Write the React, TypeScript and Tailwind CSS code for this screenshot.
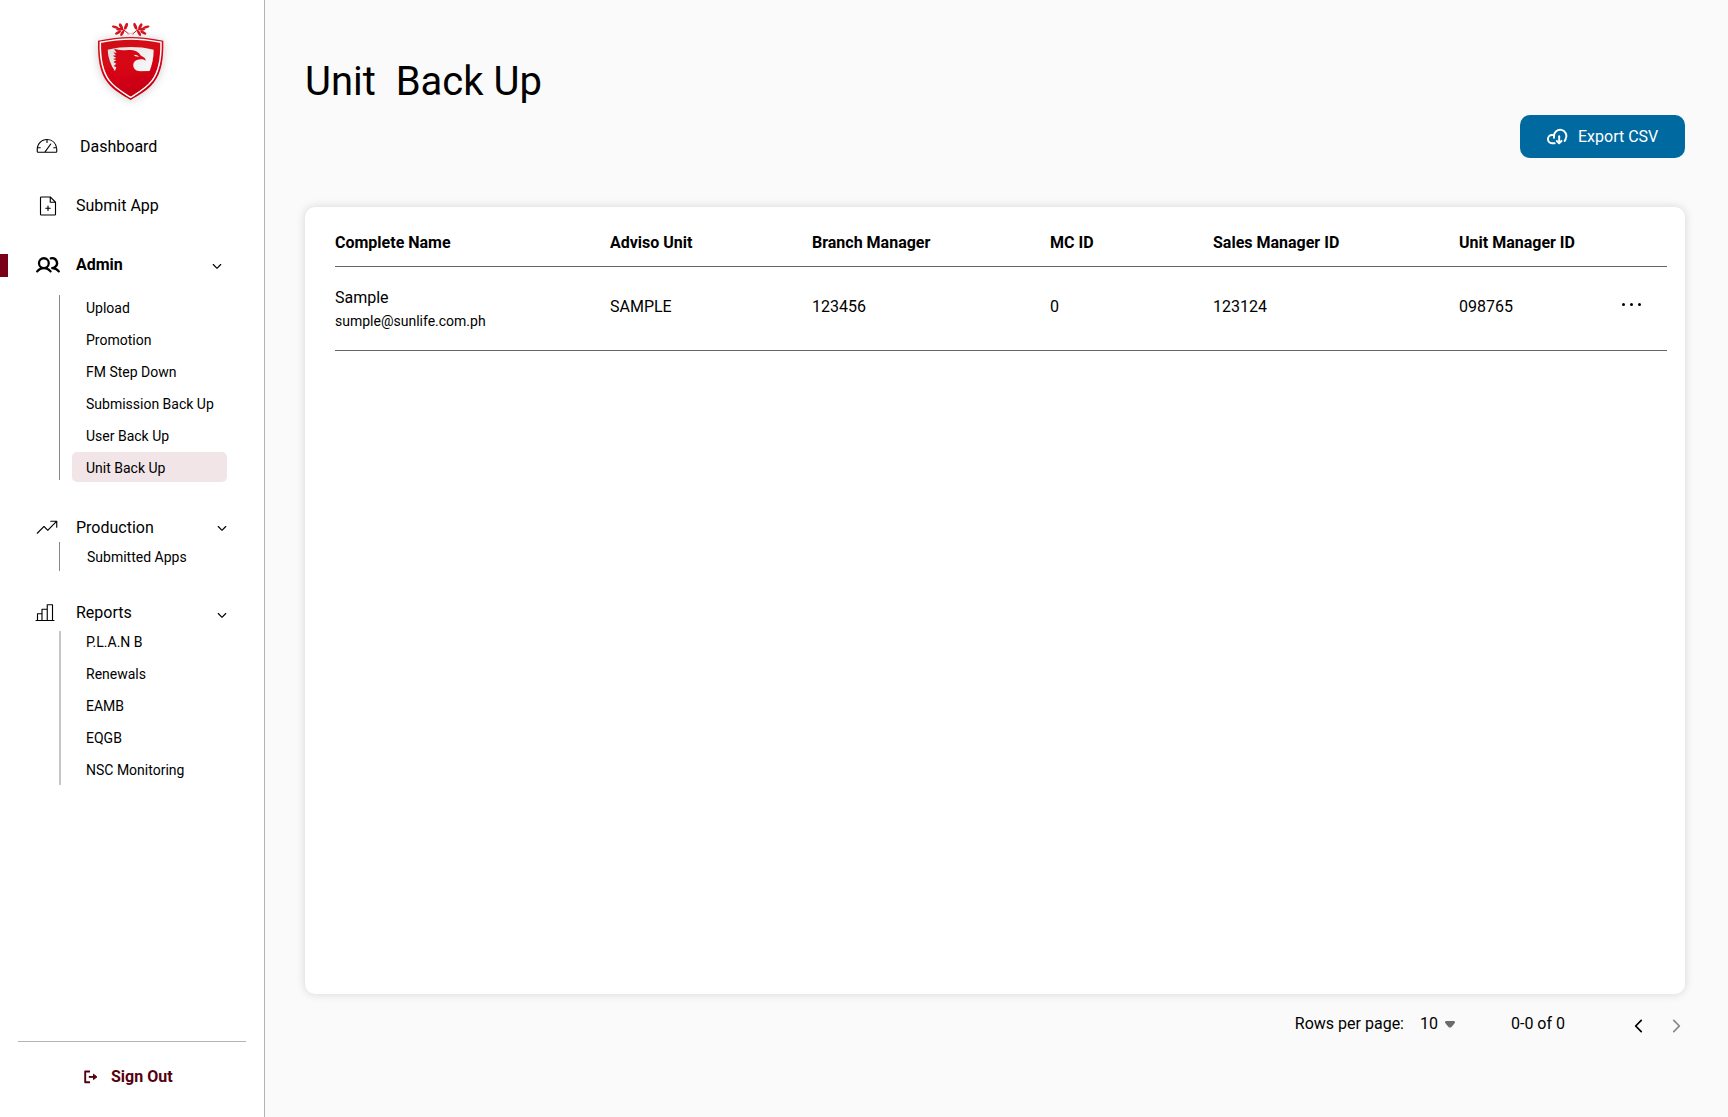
import React from 'react';
import {
  PiCaretDownBold,
  PiCaretLeftBold,
  PiCaretRightBold,
  PiChartBarLight,
  PiFilePlusLight,
  PiGaugeLight,
  PiTrendUpLight,
  PiUsersBold,
} from 'react-icons/pi';

function Logo() {
  return (
    <svg viewBox="0 0 300 300" className="h-[100px] w-[100px] shrink-0 overflow-visible">
      <defs>
        <linearGradient id="crest" gradientUnits="userSpaceOnUse" x1="100" y1="80" x2="170" y2="270">
          <stop offset="0" stopColor="#cf0a14" />
          <stop offset="0.5" stopColor="#d80615" />
          <stop offset="1" stopColor="#c00010" />
        </linearGradient>
        <linearGradient id="field" x1="0" y1="0" x2="1" y2="0.6">
          <stop offset="0" stopColor="#dedee0" />
          <stop offset="1" stopColor="#f6f6f6" />
        </linearGradient>
        <filter id="glow" x="-30%" y="-30%" width="160%" height="160%">
          <feDropShadow dx="0" dy="2" stdDeviation="14" floodColor="#000" floodOpacity="0.2" />
        </filter>
      </defs>
      <path filter="url(#glow)" d="M54 92C88 86 121 81 152 81S217 86 250 92C251 145 245 188 221 218C203 241 178 254 152 270C126 254 101 241 83 218C59 188 53 145 54 92Z" fill="url(#crest)" />
      <path d="M61 97C93 91 123 87 152 87S211 91 243 97C244 145 238 184 216 212C199 235 176 247 152 262C128 247 105 235 88 212C66 184 60 145 61 97Z" fill="none" stroke="#fff" strokeWidth="4.5" />
      <path d="M83 119C107 113 130 111 152 111S197 113 221 119C221 142 217 163 208 185H106C92 165 84 143 83 119Z" fill="url(#field)" />
      <path d="M102 116C118 121 136 121 153 120C166 120 176 127 183 137C191 140 198 145 197 152C190 147 179 147 171 150C161 154 158 163 161 172C164 181 173 184 184 184L212 183L205 200H112L104 185L109 172L101 168L109 161L100 156L109 151L99 147L109 144L98 137L108 136L100 127L110 129Z" fill="url(#crest)" />
      <path d="M161 134C168 134 174 136 178 140L166 139Z" fill="#fff" />
      {[false, true].map((flip) => (
        <g key={String(flip)} transform={flip ? 'translate(304 0) scale(-1 1)' : undefined} fill="#d41420">
          <ellipse cx="105" cy="51" rx="10" ry="3.5" transform="rotate(14 105 51)" />
          <ellipse cx="123" cy="49" rx="10" ry="4.5" transform="rotate(62 123 49)" />
          <ellipse cx="138" cy="49" rx="11" ry="4.5" transform="rotate(112 138 49)" />
          <ellipse cx="118" cy="58" rx="10" ry="4" transform="rotate(5 118 58)" />
          <ellipse cx="114" cy="68" rx="10" ry="4" transform="rotate(-30 114 68)" />
          <ellipse cx="127" cy="69" rx="10" ry="4" transform="rotate(-60 127 69)" />
          <path d="M112 53L132 60L146 72" fill="none" stroke="#d41420" strokeWidth="3" />
        </g>
      ))}
      <path d="M142 74L160 68M144 68L162 74" stroke="#e8a4a8" strokeWidth="1.5" />
    </svg>
  );
}

function SignOutIcon() {
  return (
    <svg viewBox="0 0 14 14" className="mr-[13px] h-[14px] w-[14px]" fill="none" stroke="#56000f" strokeWidth="1.9" strokeLinejoin="round">
      <path d="M6 1.5H1.2V12.2H6" />
      <path d="M4.8 6.9H10" />
      <path d="M9.5 4.2L12.9 6.9L9.5 9.6Z" fill="#56000f" strokeWidth="1" />
    </svg>
  );
}

function CloudDownloadIcon() {
  return (
    <svg viewBox="19 39 66 51" className="h-[17px] w-[22px]" fill="none" stroke="#fff" strokeWidth="5.8" strokeLinecap="round" strokeLinejoin="round">
      <path d="M45 84.5H37A12.2 12.2 0 0 1 37 60Q39 60 41 60.5" />
      <path d="M43 68V63.5A18.5 18.5 0 1 1 78 71Q77 75 75 78" />
      <path d="M58.5 64V83" />
      <path d="M51.5 78L58.5 84.5L65.5 78" />
    </svg>
  );
}

function SubItem({ label, active }: { label: string; active?: boolean }) {
  return (
    <a className={`flex h-[30px] w-[155px] items-center rounded-[5px] pt-[2px] pl-[14px] text-[14px] whitespace-nowrap ${active ? 'bg-[#f2e5e8]' : ''}`}>
      {label}
    </a>
  );
}

const adminItems = ['Upload', 'Promotion', 'FM Step Down', 'Submission Back Up', 'User Back Up', 'Unit Back Up'];
const reportItems = ['P.L.A.N B', 'Renewals', 'EAMB', 'EQGB', 'NSC Monitoring'];
const columns = ['Complete Name', 'Adviso Unit', 'Branch Manager', 'MC ID', 'Sales Manager ID', 'Unit Manager ID', ''];
const grid = 'grid grid-cols-[275px_202px_238px_163px_246px_163px_1fr]';

export default function App() {
  return (
    <div className="flex h-[1117px] w-[1728px] overflow-hidden bg-[#fafafa] font-['Roboto',sans-serif] text-[16px] leading-[20px] text-black">
      <aside className="flex w-[265px] shrink-0 flex-col border-r border-[#b3b3b3] bg-white">
        <div className="flex h-[127px] pt-[10px] pl-[80px]">
          <Logo />
        </div>
        <nav className="flex flex-col">
          <a className="flex h-[40px] items-center pl-[35px]">
            <PiGaugeLight size={24} />
            <span className="ml-[21px]">Dashboard</span>
          </a>
          <a className="mt-[19px] flex h-[40px] items-center pl-[35.5px]">
            <PiFilePlusLight size={24} />
            <span className="ml-[16.5px]">Submit App</span>
          </a>
          <a className="mt-[19px] flex h-[40px] items-center font-bold">
            <span className="h-[23px] w-[8px] bg-[#7a0019]" />
            <PiUsersBold size={24} className="ml-[27.5px]" />
            <span className="ml-[16.5px]">Admin</span>
            <PiCaretDownBold size={12} className="mt-[2px] mr-[41px] ml-auto" />
          </a>
          <div className="mt-[10px] ml-[59px] h-[185px] border-l border-[#888888] pl-[12px]">
            <div className="relative top-[-3px] flex flex-col gap-[2px]">
              {adminItems.map((label) => (
                <SubItem key={label} label={label} active={label === 'Unit Back Up'} />
              ))}
            </div>
          </div>

          <a className="mt-[33px] flex h-[29px] items-center pl-[35px]">
            <PiTrendUpLight size={24} />
            <span className="ml-[17px]">Production</span>
            <PiCaretDownBold size={12} className="mr-[36px] ml-auto" />
          </a>
          <div className="ml-[59px] flex h-[29px] items-start border-l border-[#888888] pl-[13px]">
            <div className="-mt-[1px]">
              <SubItem label="Submitted Apps" />
            </div>
          </div>

          <a className="mt-[27px] flex h-[30px] items-center pl-[32.5px]">
            <PiChartBarLight size={24} />
            <span className="ml-[19.5px]">Reports</span>
            <PiCaretDownBold size={12} className="mt-[3px] mr-[36px] ml-auto" />
          </a>
          <div className="mt-[3px] ml-[59px] flex h-[154px] flex-col border-l-2 border-[#c6c6c6] pl-[11px]">
            <div className="-mt-[5px] flex flex-col gap-[2px]">
              {reportItems.map((label) => (
                <SubItem key={label} label={label} />
              ))}
            </div>
          </div>
        </nav>
        <div className="mr-[18px] mb-[30px] ml-[18px] mt-auto flex h-[46px] items-end border-t border-[#b3b3b3] pl-[66px] font-bold text-[#56000f]">
          <div className="flex items-center">
            <SignOutIcon />
            Sign Out
          </div>
        </div>
      </aside>

      <main className="flex flex-1 flex-col pr-[43px] pl-[40px]">
        <h1 className="mt-[58px] h-[57px] text-[40px] leading-[48px] whitespace-pre">{'Unit  Back Up'}</h1>
        <button className="flex h-[43px] w-[165px] items-center self-end rounded-[10px] bg-[#0069a0] pl-[26px] text-white">
          <CloudDownloadIcon />
          <span className="ml-[10px]">Export CSV</span>
        </button>

        <section className="mt-[49px] h-[787px] rounded-[10px] bg-white pr-[18px] pl-[30px] shadow-[0_0_10px_rgba(0,0,0,0.15)]">
          <div className={`${grid} h-[60px] items-center border-b border-[#666666] pt-[12px] font-bold`}>
            {columns.map((c) => (
              <span key={c}>{c}</span>
            ))}
          </div>
          <div className={`${grid} h-[84px] items-center border-b border-[#666666] pb-[3px]`}>
            <div className="flex flex-col pt-[5px]">
              <span className="leading-[23px]">Sample</span>
              <span className="text-[14px] leading-[24px]">sumple@sunlife.com.ph</span>
            </div>
            <span>SAMPLE</span>
            <span>123456</span>
            <span>0</span>
            <span>123124</span>
            <span>098765</span>
            <div className="-mt-[6px] flex gap-[5px]">
              <i className="h-[3px] w-[3px] rounded-full bg-black" />
              <i className="h-[3px] w-[3px] rounded-full bg-black" />
              <i className="h-[3px] w-[3px] rounded-full bg-black" />
            </div>
          </div>
        </section>

        <footer className="mt-[10px] flex h-[40px] items-center justify-end">
          <span>Rows per page:</span>
          <span className="ml-[16px]">10</span>
          <svg viewBox="0 0 10 7" className="ml-[7px] h-[7px] w-[10px]" fill="#6b6b6b">
            <path d="M1 0H9Q10 .3 10 1.2Q9.6 3 6.2 6.2Q5 7 3.8 6.2Q.4 3 0 1.2Q0 .3 1 0Z" />
          </svg>
          <span className="ml-[56px]">0-0 of 0</span>
          <PiCaretLeftBold size={18} className="mt-[3px] ml-[65px]" />
          <PiCaretRightBold size={18} className="mt-[3px] ml-[19px] text-[#888888]" />
        </footer>
      </main>
    </div>
  );
}
